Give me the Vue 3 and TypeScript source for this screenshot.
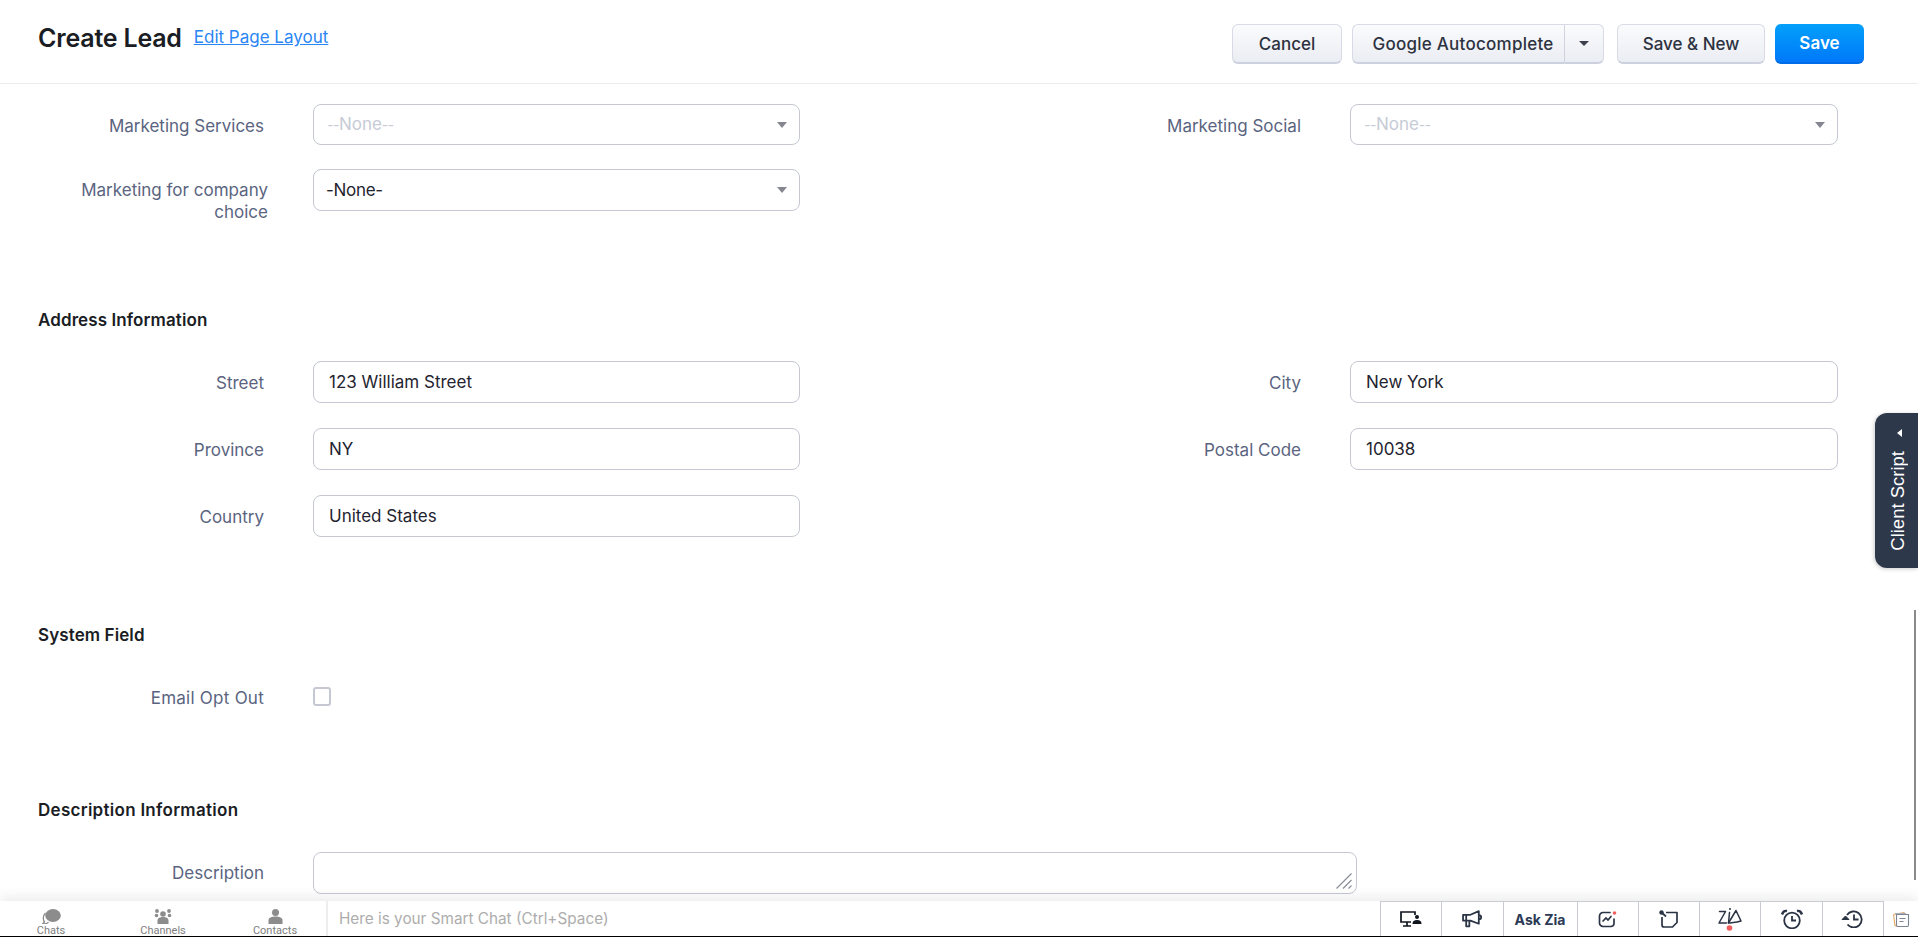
<script setup lang="ts">
interface Field { label: string; value: string }
const addressRows: Field[][] = [
  [{ label: 'Street', value: '123 William Street' }, { label: 'City', value: 'New York' }],
  [{ label: 'Province', value: 'NY' }, { label: 'Postal Code', value: '10038' }],
  [{ label: 'Country', value: 'United States' }],
]
</script>

<template>
  <div class="page">
    <header class="head">
      <h1 class="title">Create Lead</h1>
      <a class="edit">Edit Page Layout</a>
      <div class="actions">
        <button class="btn cancel">Cancel</button>
        <div class="split">
          <button class="btn split-main">Google Autocomplete</button>
          <button class="btn split-arrow"><span class="caret dark"></span></button>
        </div>
        <button class="btn savenew">Save &amp; New</button>
        <button class="btn save">Save</button>
      </div>
    </header>

    <main class="content">
      <div class="row first">
        <div class="cell">
          <label class="lab">Marketing Services</label>
          <div class="box select"><span class="ph"><span class="hy">--</span>None<span class="hy">--</span></span><span class="caret"></span></div>
        </div>
        <div class="cell">
          <label class="lab">Marketing Social</label>
          <div class="box select"><span class="ph"><span class="hy">--</span>None<span class="hy">--</span></span><span class="caret"></span></div>
        </div>
      </div>
      <div class="row second">
        <div class="cell">
          <label class="lab two">Marketing for company choice</label>
          <div class="box select"><span class="val tight">-None-</span><span class="caret"></span></div>
        </div>
      </div>

      <h2 class="sec address">Address Information</h2>
      <div v-for="(r, i) in addressRows" :key="i" class="row addr">
        <div v-for="f in r" :key="f.label" class="cell">
          <label class="lab">{{ f.label }}</label>
          <div class="box"><span class="val">{{ f.value }}</span></div>
        </div>
      </div>

      <h2 class="sec system">System Field</h2>
      <div class="row check-row">
        <div class="cell">
          <label class="lab">Email Opt Out</label>
          <span class="check"></span>
        </div>
      </div>

      <h2 class="sec descr">Description Information</h2>
      <div class="row desc-row">
        <div class="cell wide">
          <label class="lab">Description</label>
          <div class="box area">
            <svg class="grip" width="16" height="16" viewBox="0 0 16 16"><path d="M.5 15.500 15.500.5M7 15.500l8.500-8.500M12.500 15.500l3-3" stroke="#8b8e98" stroke-width="1.200" fill="none"/></svg>
          </div>
        </div>
      </div>
    </main>

    <aside class="client">
      <span class="client-text">Client Script</span>
      <span class="client-arrow"></span>
    </aside>
    <div class="scrollbar"></div>

    <footer class="foot">
      <div class="tabs">
        <div class="tab">
          <svg width="19" height="15" viewBox="0 0 19 15"><ellipse cx="11" cy="6.500" rx="7.800" ry="6.500" fill="#8c8c8c"/><path d="M3.500 4C.5 7 1 11 2.500 13 1.500 14 1 14.500.5 15c2.500 0 5-.5 6-2" fill="none" stroke="#8c8c8c" stroke-width="1.300"/></svg>
          <span>Chats</span>
        </div>
        <div class="tab">
          <svg width="18" height="15" viewBox="0 0 18 15" fill="#8c8c8c"><circle cx="9" cy="5" r="2.800"/><circle cx="3" cy="2" r="1.900"/><circle cx="15" cy="2" r="1.900"/><circle cx="2.500" cy="6.500" r="1.800"/><circle cx="15.500" cy="6.500" r="1.800"/><path d="M3.500 15v-3.500C3.500 9 6 8 9 8s5.500 1 5.500 3.500V15z"/></svg>
          <span>Channels</span>
        </div>
        <div class="tab">
          <svg width="15" height="15" viewBox="0 0 15 15" fill="#8c8c8c"><circle cx="7.500" cy="3.500" r="3.500"/><path d="M.5 15v-3.500C.5 8.500 3.500 7.500 7.500 7.500s7 1 7 4V15z"/></svg>
          <span>Contacts</span>
        </div>
      </div>
      <div class="smart">Here is your Smart Chat (Ctrl+Space)</div>
      <div class="tools">
        <div class="tool">
          <svg width="22" height="16" viewBox="0 0 22 16" fill="none" stroke="#10141d" stroke-width="1.700"><path d="M11 11H1V1h14v3M7 11v3.500M3 15h8"/><circle cx="17" cy="6" r="2" fill="#10141d" stroke="none"/><path d="M12.500 13c0-3 1.500-4 4.500-4s4.500 1 4.500 4z" fill="#10141d" stroke="none"/></svg>
        </div>
        <div class="tool">
          <svg width="21" height="18" viewBox="0 0 20 17" fill="none" stroke="#2b3445" stroke-width="1.700" stroke-linejoin="round"><path d="M1 4.500h7l8-3.500v12L8 10H1zM4 10v5.500h3V10M4 4.500V10M16 4.500c3 .5 3 4 0 4.500"/></svg>
        </div>
        <div class="tool ask">Ask Zia</div>
        <div class="tool">
          <svg width="20" height="17" viewBox="0 0 20 17" fill="none" stroke="#2b3445" stroke-width="1.700" stroke-linecap="round"><path d="M12 1.500H5a3.500 3.500 0 0 0-3.500 3.500v7A3.500 3.500 0 0 0 5 15.500h8a3 3 0 0 0 3-3V8"/><path d="M5 10l3-3 2 2 3-3.500"/><circle cx="16.500" cy="2" r="1.800" fill="#f25c5c" stroke="none"/></svg>
        </div>
        <div class="tool">
          <svg width="19" height="18" viewBox="0 0 19 18" fill="none" stroke="#2b3445" stroke-width="1.700" stroke-linejoin="round"><path d="M7 2.500h11v10l-4.500 4.500H5a2 2 0 0 1-2-2V7"/><path d="M2 2l5 4.500"/><circle cx="2.500" cy="2.500" r="2.200" fill="#2b3445" stroke="none"/></svg>
        </div>
        <div class="tool">
          <svg width="24" height="23" viewBox="0 0 24 23" fill="none" stroke="#2b3445" stroke-width="1.500" stroke-linejoin="round" stroke-linecap="round"><path d="M1.500 3.500h6L1 15h7.500"/><path d="M11.500 4.500 10.500 15"/><path d="M10.500 15 18 2.500 23 13c-4 1.500-8 1.500-12.500 2z"/><circle cx="12" cy="1" r="1" fill="#2b3445" stroke="none"/><circle cx="11.500" cy="20" r="2.800" fill="#f25c5c" stroke="none"/></svg>
        </div>
        <div class="tool">
          <svg width="24" height="20" viewBox="0 0 24 20" fill="none" stroke="#2b3445" stroke-width="1.800"><circle cx="12" cy="11.500" r="7.800"/><path d="M12 7v4.500h4"/><path d="M2 5.500C3 2.500 5 1.500 7 2M22 5.500C21 2.500 19 1.500 17 2" stroke-width="2.400"/></svg>
        </div>
        <div class="tool">
          <svg width="23" height="18" viewBox="0 0 23 18" fill="none" stroke="#2b3445" stroke-width="1.800"><path d="M6 5a8 8 0 1 1 .5 9.500"/><path d="M13 4.500V9.500h4.500"/><path d="M1 9.500 4.500 6 8 9.500z" fill="#2b3445" stroke-width="1"/></svg>
        </div>
      </div>
      <div class="notes">
        <svg width="18" height="16" viewBox="0 0 18 16" fill="none" stroke-width="1.100"><path d="M1.500 3.500 12 1.500l1 2" stroke="#e2a867"/><path d="M1.500 3.500 3 14.500l3 1" stroke="#e2a867"/><path d="M3 2.500h11" stroke="#aab0bb"/><path d="M4.500 3.500h12v10.500a1.500 1.500 0 0 1-1.500 1.500H6a1.500 1.500 0 0 1-1.500-1.500z" fill="#fff" stroke="#7b8494"/><path d="M7.500 7.500h6M7.500 10.500h4" stroke="#7b8494"/></svg>
      </div>
    </footer>
  </div>
</template>

<style>
html, body { margin: 0; overflow: hidden; background: #fff; }
</style>

<style scoped>
.page {
  height: 937px;
  display: flex;
  flex-direction: column;
  position: relative;
  font-family: Inter, "Noto Sans", sans-serif;
  color: #1f2430;
  overflow: hidden;
  box-sizing: border-box;
  border-bottom: 1px solid #000;
}
.head {
  height: 84px;
  flex: none;
  box-sizing: border-box;
  border-bottom: 1px solid #ececec;
  display: flex;
  align-items: flex-start;
  padding: 24px 54px 0 38px;
}
.title { margin: 0; font-size: 25px; font-weight: 600; line-height: 28px; color: #1a1d24; letter-spacing: -0.2px; }
.edit { margin-left: 12px; font-size: 17px; line-height: 27px; color: #2a86f5; text-decoration: underline; }
.actions { margin-left: auto; display: flex; align-items: flex-start; }
.btn {
  height: 40px;
  box-sizing: border-box;
  border: 1px solid #d8dbe5;
  border-bottom: 2px solid #cdd1de;
  border-radius: 6px;
  background: linear-gradient(#fbfbfd, #eaedf3);
  font: 500 17px Inter, sans-serif;
  color: #2d3240;
  padding: 0;
}
.cancel { width: 110px; margin-right: 10px; }
.split { display: flex; margin-right: 13px; }
.split-main { width: 213px; border-radius: 6px 0 0 6px; border-right: 1px solid #d0d3dd; padding-left: 9px; letter-spacing: 0.25px; white-space: nowrap; }
.split-arrow { width: 39px; border-radius: 0 6px 6px 0; border-left: 0; display: flex; align-items: center; justify-content: center; }
.savenew { width: 148px; margin-right: 10px; }
.save { width: 89px; border: 0; border-bottom: 2px solid #006be6; background: linear-gradient(#03a0fa, #0078fa); color: #fff; font-weight: 600; }
.caret { width: 0; height: 0; border: 5.500px solid transparent; border-top: 6px solid #85868f; border-bottom: 0; }
.caret.dark { border-top-color: #3c404c; border-left-width: 5px; border-right-width: 5px; border-top-width: 5px; }

.content { flex: 1; min-height: 0; overflow: hidden; padding-left: 38px; }
.row { display: flex; }
.cell { width: 1037px; display: flex; align-items: flex-start; }
.cell:nth-child(2) { width: auto; }
.cell:nth-child(2) .box { width: 488px; }
.lab {
  width: 226px;
  flex: none;
  text-align: right;
  font-size: 17px;
  line-height: 22px;
  color: #5a6480;
  margin-top: 11px;
  margin-right: 49px;
}
.lab.two { width: 230px; margin-right: 45px; margin-top: 10px; }
.box {
  width: 487px;
  height: 42px;
  box-sizing: border-box;
  border: 1px solid #c5c8d2;
  border-radius: 8px;
  display: flex;
  align-items: center;
  padding: 0 12px 0 15px;
  font-size: 17px;
  position: relative;
  background: #fff;
}
.select { justify-content: space-between; }
.first { padding-top: 20px; }
.first .box { height: 41px; }
.second { padding-top: 24px; }
.ph { color: #c7cbd6; margin-left: -2px; margin-top: -2px; }
.hy { font-size: 14px; letter-spacing: -0.5px; }
.val { color: #1f2430; }
.val.tight { margin-left: -3px; letter-spacing: -0.3px; }
.sec { margin: 0; font-size: 17px; line-height: 22px; font-weight: 600; color: #1a1d24; letter-spacing: 0.1px; }
.address { margin-top: 86px; }
.addr { margin-top: 25px; }
.sec.address + .addr { margin-top: 30px; }
.system { margin-top: 87px; }
.check-row { margin-top: 30px; }
.check-row .lab { letter-spacing: 0.25px; }
.check {
  width: 18px;
  height: 19px;
  box-sizing: border-box;
  border: 2px solid #c5c8d2;
  border-radius: 3px;
  margin-top: 11px;
}
.descr { margin-top: 90px; letter-spacing: 0.28px; }
.desc-row { margin-top: 31px; }
.desc-row .lab { margin-top: 10px; }
.wide { width: auto; }
.area { width: 1044px; }
.grip { position: absolute; right: 4px; bottom: 4px; }

.client {
  position: absolute;
  right: 0;
  top: 413px;
  width: 43px;
  height: 155px;
  background: #2e384b;
  border-radius: 12px 0 0 12px;
  box-shadow: -1px 1px 4px rgba(0,0,0,.2);
}
.client-arrow { position: absolute; top: 16px; left: 22px; width: 0; height: 0; border: 4px solid transparent; border-right: 5px solid #fff; border-left: 0; }
.client-text {
  position: absolute;
  bottom: 17px;
  left: 13px;
  writing-mode: vertical-rl;
  transform: rotate(180deg);
  color: #fff;
  font: 18.500px/20px "Liberation Sans", Arial, sans-serif;
}
.scrollbar { position: absolute; right: 2px; top: 610px; width: 2px; height: 270px; background: #8a8a8a; }

.foot {
  height: 35px;
  flex: none;
  display: flex;
  background: #fff;
  box-shadow: 0 -5px 12px rgba(0,0,0,.07);
  position: relative;
}
.tabs { width: 328px; flex: none; display: grid; grid-template-columns: 102px 122px 102px; border-right: 2px solid #ededed; box-sizing: border-box; }
.tab { display: flex; flex-direction: column; align-items: center; color: #7e7e7e; font: 11px Roboto, sans-serif; padding-top: 8px; box-sizing: border-box; }
.tab span { line-height: 11px; margin-top: 1px; }
.smart { flex: 1; padding-left: 11px; color: #adadad; font-size: 15.300px; line-height: 35px; }
.tools { display: flex; border-top: 1px solid #c8cbd4; }
.tool { width: 61.300px; height: 34px; box-sizing: border-box; border-left: 1px solid #c8cbd4; display: flex; align-items: center; justify-content: center; }
.ask { width: 74px; font-size: 14px; font-weight: 700; color: #2b3a55; }
.notes { width: 35px; flex: none; border-left: 1px solid #c8cbd4; display: flex; align-items: center; justify-content: center; box-sizing: border-box; }
</style>
